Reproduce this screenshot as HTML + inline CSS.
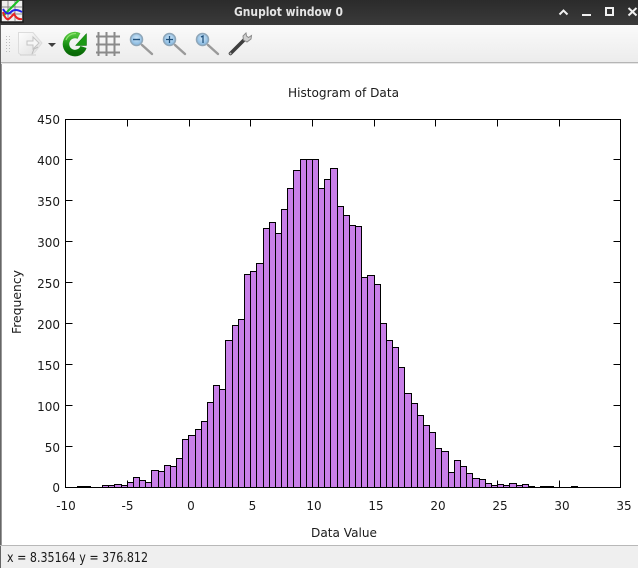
<!DOCTYPE html>
<html><head><meta charset="utf-8"><title>Gnuplot window 0</title>
<style>
html,body{margin:0;padding:0;background:#fff;width:638px;height:568px;overflow:hidden}
svg{display:block}
text{font-family:"DejaVu Sans","Liberation Sans",sans-serif;font-size:12px;fill:#1a1a1a}
</style></head><body>
<svg width="638" height="568" viewBox="0 0 638 568" xmlns="http://www.w3.org/2000/svg">
<defs>
<linearGradient id="tb" x1="0" y1="0" x2="0" y2="1"><stop offset="0" stop-color="#2b2b2b"/><stop offset="1" stop-color="#3a3a3a"/></linearGradient>
<linearGradient id="tool" x1="0" y1="0" x2="0" y2="1"><stop offset="0" stop-color="#fafafa"/><stop offset="1" stop-color="#ececec"/></linearGradient>
<linearGradient id="page" x1="0" y1="0" x2="1" y2="1"><stop offset="0" stop-color="#fdfdfd"/><stop offset="1" stop-color="#dedede"/></linearGradient>
<linearGradient id="green" x1="0" y1="0" x2="0" y2="1"><stop offset="0" stop-color="#4fc23a"/><stop offset=".6" stop-color="#128a0e"/><stop offset="1" stop-color="#0a6a08"/></linearGradient>
<radialGradient id="lens" cx=".5" cy=".4" r=".6"><stop offset="0" stop-color="#cfe6f8"/><stop offset="1" stop-color="#7fb4de"/></radialGradient>
</defs>

<rect width="638" height="25" fill="url(#tb)"/>
<rect y="25" width="638" height="37" fill="url(#tool)"/>
<rect y="62" width="638" height="1" fill="#b5b5b5"/>
<rect y="63" width="638" height="1" fill="#e6e6e6"/>
<rect y="64" width="638" height="481" fill="#fff"/>
<rect y="25" width="1" height="543" fill="#666"/>
<rect x="1" y="64" width="1" height="481" fill="#999"/>
<rect y="545" width="638" height="1" fill="#b8b8b8"/>
<rect x="1" y="546" width="637" height="22" fill="#efefef"/>

<!-- window icon -->
<rect x="1" y="0" width="22" height="22" fill="#efefef" stroke="#1a1a1a" stroke-width="1.500"/>
<path d="M2 7H22M2 14H22M8 1V21M15 1V21" stroke="#8a8a8a" stroke-width="1"/>
<path d="M3 16L8 11L13 6L19 0" stroke="#18c024" stroke-width="2" fill="none"/>
<path d="M3 9Q7 16 11 12T22 12" stroke="#2424e8" stroke-width="2" fill="none"/>
<path d="M3 12Q6 22 10 18T14 14Q17 20 22 19" stroke="#e82424" stroke-width="2" fill="none"/>

<text x="288.500" y="16" text-anchor="middle" textLength="109" lengthAdjust="spacingAndGlyphs" style="font-weight:bold;font-size:12px;fill:#e4e4e4">Gnuplot window 0</text>

<!-- window buttons -->
<path d="M559.500 14.500L563.500 10.500L567.500 14.500" stroke="#f0f0f0" stroke-width="2" fill="none"/>
<rect x="582" y="14" width="9" height="2" fill="#f0f0f0"/>
<rect x="606" y="8" width="7" height="7" fill="none" stroke="#f0f0f0" stroke-width="2"/>
<path d="M628.500 8L636.500 15.500M636.500 8L628.500 15.500" stroke="#f0f0f0" stroke-width="2" fill="none"/>

<!-- grip -->
<path d="M6.500 36V52M9.500 36V52" stroke="#bdbdbd" stroke-width="1" stroke-dasharray="1 2" fill="none"/>

<!-- doc export icon -->
<path d="M18.500 32.500H33L42 43L35 52L31 55H21L18.500 53Z" fill="url(#page)" stroke="#dcdcdc"/>
<path d="M27 41H33V37L39 43L33 49V45H27Z" fill="#f6f6f6" stroke="#c4c4c4"/>
<path d="M32 54L34 49L38 47" stroke="#bdbdbd" stroke-width="1" fill="none"/>
<path d="M20 55H36" stroke="#cfcfcf" stroke-width="1"/>
<path d="M48 43H56L52 47Z" fill="#3f3f3f"/>

<!-- refresh -->
<path d="M83.500 47A9 9 0 1 1 79 36" fill="none" stroke="url(#green)" stroke-width="6.500"/>
<path d="M86.500 33.500V45.500H75.500Z" fill="#1a9a14" stroke="#0d6b0b" stroke-width=".5"/>
<path d="M66 40A10 10 0 0 1 76 33.500" stroke="#8ee070" stroke-width="1.200" fill="none"/>

<!-- grid -->
<path d="M98.500 32V56M106.500 32V56M114.500 32V56M96 36.500H120M96 44.500H120M96 52.500H120" stroke="#8a8a8a" stroke-width="2" fill="none"/>

<!-- zoom out -->
<path d="M142 45L152 54" stroke="#9a9a9a" stroke-width="2.400" stroke-linecap="round"/>
<circle cx="136.500" cy="39.500" r="6" fill="url(#lens)" stroke="#8fa6b8" stroke-width="1.500"/>
<path d="M133 39.500H140" stroke="#1f4f7a" stroke-width="1.400"/>
<!-- zoom in -->
<path d="M175 45L185 54" stroke="#9a9a9a" stroke-width="2.400" stroke-linecap="round"/>
<circle cx="169.500" cy="39.500" r="6" fill="url(#lens)" stroke="#8fa6b8" stroke-width="1.500"/>
<path d="M166 39.500H173M169.500 36V43" stroke="#1f4f7a" stroke-width="1.300"/>
<!-- zoom 1 -->
<path d="M208 45L218 54" stroke="#9a9a9a" stroke-width="2.400" stroke-linecap="round"/>
<circle cx="202.500" cy="39.500" r="6" fill="url(#lens)" stroke="#8fa6b8" stroke-width="1.500"/>
<path d="M201 37L203 36V43" stroke="#1f4f7a" stroke-width="1.300" fill="none"/>

<!-- wrench -->
<path d="M230.500 53.500L244 40" stroke="#3f3f3f" stroke-width="3.600" stroke-linecap="round"/>
<circle cx="230.500" cy="53.500" r="1" fill="#bbb"/>
<path d="M246 33L243 36L243.500 40L247 42L251 39L251.500 35.500L248.500 37.500L246.500 36Z" fill="#cfcfcf" stroke="#8a8a8a" stroke-width="1"/>

<!-- plot title & labels -->
<text x="343.500" y="97" text-anchor="middle" textLength="111" lengthAdjust="spacingAndGlyphs">Histogram of Data</text>
<text x="344" y="537" text-anchor="middle" textLength="66" lengthAdjust="spacingAndGlyphs">Data Value</text>
<text transform="translate(21,302) rotate(-90)" text-anchor="middle" textLength="64" lengthAdjust="spacingAndGlyphs">Frequency</text>

<g text-anchor="end">
<text x="60" y="124">450</text>
<text x="60" y="165">400</text>
<text x="60" y="206">350</text>
<text x="60" y="247">300</text>
<text x="60" y="288">250</text>
<text x="60" y="329">200</text>
<text x="60" y="370">150</text>
<text x="60" y="411">100</text>
<text x="60" y="452">50</text>
<text x="60" y="492">0</text>
</g>
<g text-anchor="middle">
<text x="66" y="510">-10</text>
<text x="127.500" y="510">-5</text>
<text x="191" y="510">0</text>
<text x="252.500" y="510">5</text>
<text x="314" y="510">10</text>
<text x="376" y="510">15</text>
<text x="438" y="510">20</text>
<text x="500" y="510">25</text>
<text x="562" y="510">30</text>
<text x="624" y="510">35</text>
</g>

<!-- ticks -->
<path shape-rendering="crispEdges" stroke="#000" stroke-width="1" fill="none" d="M65.500 159.500H72.500M65.500 200.500H72.500M65.500 241.500H72.500M65.500 282.500H72.500M65.500 323.500H72.500M65.500 364.500H72.500M65.500 405.500H72.500M65.500 446.500H72.500
M620.500 159.500H613.500M620.500 200.500H613.500M620.500 241.500H613.500M620.500 282.500H613.500M620.500 323.500H613.500M620.500 364.500H613.500M620.500 405.500H613.500M620.500 446.500H613.500
M127.500 119.500V126.500M189.500 119.500V126.500M250.500 119.500V126.500M312.500 119.500V126.500M374.500 119.500V126.500M435.500 119.500V126.500M497.500 119.500V126.500M559.500 119.500V126.500
M127.500 487.500V480.500M497.500 487.500V480.500M559.500 487.500V480.500"/>

<!-- bars -->
<path shape-rendering="crispEdges" fill="#c87fe8" stroke="#000" stroke-width="1" d="M77.500 487.500V486.500H84.500V487.500ZM84.500 487.500V486.500H90.500V487.500ZM102.500 487.500V485.500H108.500V487.500ZM108.500 487.500V485.500H114.500V487.500ZM114.500 487.500V484.500H121.500V487.500ZM121.500 487.500V485.500H127.500V487.500ZM127.500 487.500V482.500H133.500V487.500ZM133.500 487.500V477.500H139.500V487.500ZM139.500 487.500V480.500H145.500V487.500ZM145.500 487.500V482.500H151.500V487.500ZM151.500 487.500V470.500H158.500V487.500ZM158.500 487.500V471.500H164.500V487.500ZM164.500 487.500V465.500H170.500V487.500ZM170.500 487.500V466.500H176.500V487.500ZM176.500 487.500V458.500H182.500V487.500ZM182.500 487.500V439.500H188.500V487.500ZM188.500 487.500V435.500H195.500V487.500ZM195.500 487.500V429.500H201.500V487.500ZM201.500 487.500V421.500H207.500V487.500ZM207.500 487.500V402.500H213.500V487.500ZM213.500 487.500V385.500H219.500V487.500ZM219.500 487.500V389.500H225.500V487.500ZM225.500 487.500V340.500H232.500V487.500ZM232.500 487.500V325.500H238.500V487.500ZM238.500 487.500V319.500H244.500V487.500ZM244.500 487.500V274.500H250.500V487.500ZM250.500 487.500V271.500H256.500V487.500ZM256.500 487.500V263.500H263.500V487.500ZM263.500 487.500V228.500H269.500V487.500ZM269.500 487.500V222.500H275.500V487.500ZM275.500 487.500V233.500H281.500V487.500ZM281.500 487.500V209.500H287.500V487.500ZM287.500 487.500V188.500H293.500V487.500ZM293.500 487.500V170.500H300.500V487.500ZM300.500 487.500V159.500H306.500V487.500ZM306.500 487.500V159.500H312.500V487.500ZM312.500 487.500V159.500H318.500V487.500ZM318.500 487.500V188.500H324.500V487.500ZM324.500 487.500V179.500H330.500V487.500ZM330.500 487.500V168.500H337.500V487.500ZM337.500 487.500V206.500H343.500V487.500ZM343.500 487.500V215.500H349.500V487.500ZM349.500 487.500V225.500H355.500V487.500ZM355.500 487.500V226.500H361.500V487.500ZM361.500 487.500V277.500H367.500V487.500ZM367.500 487.500V275.500H374.500V487.500ZM374.500 487.500V284.500H380.500V487.500ZM380.500 487.500V323.500H386.500V487.500ZM386.500 487.500V340.500H392.500V487.500ZM392.500 487.500V347.500H398.500V487.500ZM398.500 487.500V367.500H404.500V487.500ZM404.500 487.500V393.500H411.500V487.500ZM411.500 487.500V403.500H417.500V487.500ZM417.500 487.500V415.500H423.500V487.500ZM423.500 487.500V425.500H429.500V487.500ZM429.500 487.500V432.500H435.500V487.500ZM435.500 487.500V448.500H441.500V487.500ZM441.500 487.500V451.500H448.500V487.500ZM448.500 487.500V472.500H454.500V487.500ZM454.500 487.500V460.500H460.500V487.500ZM460.500 487.500V466.500H466.500V487.500ZM466.500 487.500V473.500H472.500V487.500ZM472.500 487.500V478.500H479.500V487.500ZM479.500 487.500V479.500H485.500V487.500ZM485.500 487.500V483.500H491.500V487.500ZM491.500 487.500V485.500H497.500V487.500ZM497.500 487.500V484.500H503.500V487.500ZM503.500 487.500V485.500H509.500V487.500ZM509.500 487.500V483.500H516.500V487.500ZM516.500 487.500V485.500H522.500V487.500ZM522.500 487.500V484.500H528.500V487.500ZM528.500 487.500V486.500H534.500V487.500ZM540.500 487.500V486.500H546.500V487.500ZM546.500 487.500V486.500H553.500V487.500ZM571.500 487.500V486.500H577.500V487.500Z"/>

<!-- frame -->
<rect x="65.500" y="119.500" width="555" height="368" fill="none" stroke="#000" stroke-width="1" shape-rendering="crispEdges"/>

<text x="7" y="562" textLength="141" lengthAdjust="spacingAndGlyphs" style="font-size:13px">x = 8.35164 y = 376.812</text>
</svg>
</body></html>
